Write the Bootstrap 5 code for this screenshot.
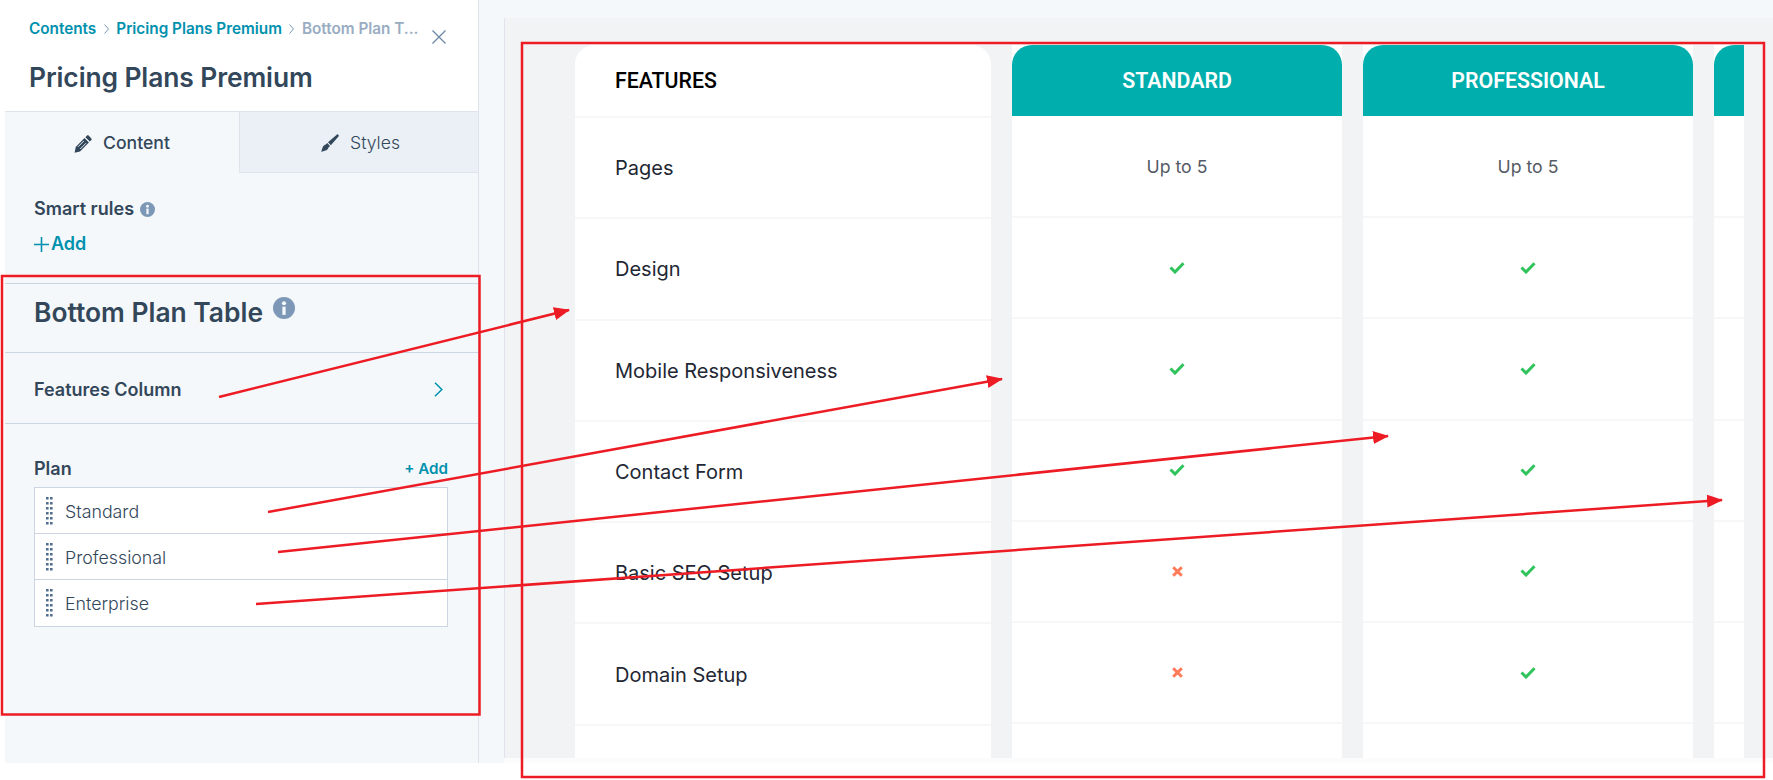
<!DOCTYPE html>
<html lang="en"><head><meta charset="utf-8"><title>Pricing Plans Premium</title>
<link href="https://cdn.jsdelivr.net/npm/bootstrap@5.3.0/dist/css/bootstrap.min.css" rel="stylesheet">
<style>
html,body{height:100%;overflow:hidden;background:#fff}
body{font-family:Inter,"Noto Sans",sans-serif;color:#33475b}
.stage{position:relative;width:1773px;height:780px;overflow:hidden}
.app{height:763px;padding-left:5px}
.side{width:474px;flex:none;background:#f5f8fa;border-right:1px solid #dfe3eb}
.side-head{background:#fff;height:112px;padding:17px 0 0 24px;border-bottom:1px solid #dfe3eb;position:relative}
.crumbs{font-size:15.3px;font-weight:600;color:#0091ae;line-height:24px;gap:7.5px}
.crumbs .cur{color:#99acc2}
.close-x{position:absolute;left:427px;top:30px}
.side-title{font-size:26.4px;font-weight:600;margin-top:21px;line-height:30px;letter-spacing:-.1px}
.tabs-row{height:61px}
.tab-a,.tab-b{display:flex;align-items:center;justify-content:center;gap:11px;font-size:17.6px;height:61px;padding-top:2px}
.tab-a{width:235px;border-right:1px solid #dfe3eb;font-weight:500}
.tab-b{flex:1;background:#eaf0f6;border-bottom:1px solid #dfe3eb;font-weight:300;padding-left:3px}
.rules{padding:26px 0 0 29px;height:110px}
.rules-t{font-size:18px;font-weight:600;line-height:20px;gap:6px}
.add-big{font-size:18px;font-weight:600;color:#0091ae;margin-top:15px;line-height:20px;gap:2px}
.sec-h{border-top:1px solid #cbd6e2;height:69px;padding:13px 0 0 29px;font-size:26.4px;font-weight:600;line-height:30px;gap:10px}
.sec-f{border-top:1px solid #cbd6e2;border-bottom:1px solid #cbd6e2;height:72px;padding:2px 35px 0 29px;font-size:18px;font-weight:600}
.plan-h{padding:35px 30px 0 29px;line-height:20px;font-size:18px;font-weight:600}
.plan-add{font-size:15.2px;color:#0091ae;font-weight:600}
.plans{margin:8px 30px 0 29px;border:1px solid #cbd6e2;background:#fff}
.plan-i{height:46px;border-bottom:1px solid #cbd6e2;padding:0 0 0 11px;gap:12px;font-size:17.8px;font-weight:300;color:#33475b}
.plan-i span{padding-top:3px}
.plan-i:last-child{border-bottom:0}
.main{flex:1;background:#f5f8fa;padding:18px 0 0 25px;min-width:0}
.panel{height:745px;background:#fcfcfc}
.canvas{height:740px;background:#f2f3f5;border-left:1px solid #dfe3eb;padding:27px 28px 0 70px;overflow:hidden}
.cols{height:713px;overflow:hidden;gap:21px}
.pcol{flex:none;width:330px;background:#fff}
.pcol.feat{width:416px;border-radius:20px 20px 0 0}
.pcol.stub{width:30px}
.phead{height:71px;margin-bottom:1px;background:#00afad;color:#fff;border-radius:20px 20px 0 0;font-family:Roboto,sans-serif;font-weight:600;font-size:21.3px}
.stub .phead{border-radius:20px 0 0 0}
.feat .phead{background:#fff;color:#000;justify-content:flex-start;padding-left:40px;border-bottom:2px solid #f7f7f8;height:73px;margin-bottom:0;font-weight:500}
.pcell{height:101.2px;border-bottom:2px solid #f7f7f8;font-size:20px;color:#222733}
.feat .pcell{padding:1px 0 0 40px;justify-content:flex-start;height:101.3px}
.up5{font-size:17.7px;color:#555a64;font-weight:400;padding-top:2px}
.over{position:absolute;left:0;top:0;pointer-events:none}
</style></head><body>
<div class="stage">
<div class="app d-flex">
<aside class="side">
 <div class="side-head">
  <div class="crumbs d-flex align-items-center"><span>Contents</span><svg width="5" height="10" viewBox="0 0 5 10"><path d="M.5 .5L4.500 5 .5 9.500" stroke="#7c98b6" fill="none"/></svg><span>Pricing Plans Premium</span><svg width="5" height="10" viewBox="0 0 5 10"><path d="M.5 .5L4.500 5 .5 9.500" stroke="#7c98b6" fill="none"/></svg><span class="cur">Bottom Plan T...</span></div>
  <svg class="close-x" width="14" height="14" viewBox="0 0 14 14"><path d="M.5 .5l13 13M13.500 .5l-13 13" stroke="#6a87a6" stroke-width="1.300" fill="none"/></svg>
  <div class="side-title">Pricing Plans Premium</div>
 </div>
 <div class="tabs-row d-flex">
  <div class="tab-a"><svg width="18" height="18" viewBox="0 0 18 18"><path d="M13 .6c.5-.4 1.200-.4 1.600 0l2.800 2.800c.4.400.4 1.100 0 1.600l-1.600 1.600-4.400-4.400zM10.500 3.100l4.400 4.400-8.900 8.900-5.400 1.300 1.100-5.700z" fill="#33475b"/><path d="M9.800 6L4 11.800M12 8.200L6.200 14" stroke="#f5f8fa" stroke-width=".9"/></svg><span>Content</span></div>
  <div class="tab-b"><svg width="18" height="18" viewBox="0 0 18 18"><path d="M16 .4c.6-.5 1.200.1 1.500.5.300.4.500 1 0 1.500L9.800 11.200 7 8.300zM6.300 9.100l2.700 2.800-1.500 1.500c-.4 1.800-1.800 2.700-3 3.100-1.100.4-3 .900-4.300 1.300.5-1.300 1-3.100 1.400-4.300.5-1.200 1.400-2.500 3.100-2.900z" fill="#33475b"/></svg><span>Styles</span></div>
 </div>
 <div class="rules">
  <div class="rules-t d-flex align-items-center">Smart rules <svg width="15" height="15" viewBox="0 0 16 16"><circle cx="8" cy="8" r="8" fill="#7c98b6"/><rect x="6.800" y="7" width="2.400" height="6" fill="#f5f8fa"/><circle cx="8" cy="4.500" r="1.500" fill="#f5f8fa"/></svg></div>
  <div class="add-big d-flex align-items-center"><svg width="15" height="15" viewBox="0 0 15 15"><path d="M7.500 0v15M0 7.500h15" stroke="#0091ae" stroke-width="1.600"/></svg><span>Add</span></div>
 </div>
 <div class="sec-h d-flex align-items-start">Bottom Plan Table <svg width="22" height="22" viewBox="0 0 16 16"><circle cx="8" cy="8" r="8" fill="#7c98b6"/><rect x="6.800" y="7" width="2.400" height="6" fill="#f5f8fa"/><circle cx="8" cy="4.500" r="1.500" fill="#f5f8fa"/></svg></div>
 <div class="sec-f d-flex align-items-center justify-content-between"><span>Features Column</span><svg width="9" height="15" viewBox="0 0 9 15"><path d="M1 .8l6.800 6.700L1 14.200" stroke="#0091ae" stroke-width="1.500" fill="none"/></svg></div>
 <div class="plan-h d-flex justify-content-between align-items-center"><span>Plan</span><span class="plan-add">+ Add</span></div>
 <div class="plans">
  <div class="plan-i d-flex align-items-center"><svg width="7" height="28" viewBox="0 0 7 28" fill="#516f90"><path d="M0 0h2.600v2.600H0zM4 0h2.600v2.600H4zM0 5h2.600v2.600H0zM4 5h2.600v2.600H4zM0 10h2.600v2.600H0zM4 10h2.600v2.600H4zM0 15h2.600v2.600H0zM4 15h2.600v2.600H4zM0 20h2.600v2.600H0zM4 20h2.600v2.600H4zM0 25h2.600v2.600H0zM4 25h2.600v2.600H4z"/></svg><span>Standard</span></div>
  <div class="plan-i d-flex align-items-center"><svg width="7" height="28" viewBox="0 0 7 28" fill="#516f90"><path d="M0 0h2.600v2.600H0zM4 0h2.600v2.600H4zM0 5h2.600v2.600H0zM4 5h2.600v2.600H4zM0 10h2.600v2.600H0zM4 10h2.600v2.600H4zM0 15h2.600v2.600H0zM4 15h2.600v2.600H4zM0 20h2.600v2.600H0zM4 20h2.600v2.600H4zM0 25h2.600v2.600H0zM4 25h2.600v2.600H4z"/></svg><span>Professional</span></div>
  <div class="plan-i d-flex align-items-center"><svg width="7" height="28" viewBox="0 0 7 28" fill="#516f90"><path d="M0 0h2.600v2.600H0zM4 0h2.600v2.600H4zM0 5h2.600v2.600H0zM4 5h2.600v2.600H4zM0 10h2.600v2.600H0zM4 10h2.600v2.600H4zM0 15h2.600v2.600H0zM4 15h2.600v2.600H4zM0 20h2.600v2.600H0zM4 20h2.600v2.600H4zM0 25h2.600v2.600H0zM4 25h2.600v2.600H4z"/></svg><span>Enterprise</span></div>
 </div>
</aside>
<main class="main"><div class="panel"><div class="canvas"><div class="cols d-flex" id="cols"></div></div></div></main>
</div>
<svg class="over" width="1773" height="780" viewBox="0 0 1773 780">
 <defs><marker id="ah" markerUnits="userSpaceOnUse" markerWidth="16" markerHeight="14" refX="15" refY="6.500" orient="auto"><path d="M0 0L16 6.500 0 13z" fill="#ed1c24"/></marker></defs>
 <g fill="none" stroke="#ed1c24" stroke-width="2.500">
  <rect x="2" y="276" width="477.500" height="438.500"/>
  <rect x="522" y="43" width="1242" height="734"/>
  <path d="M219 397L569 310" marker-end="url(#ah)"/>
  <path d="M268 512L1002 379" marker-end="url(#ah)"/>
  <path d="M278 552L1388 436" marker-end="url(#ah)"/>
  <path d="M256 604L1722 500" marker-end="url(#ah)"/>
 </g>
</svg>
</div>
<script>
var ck='<svg width="16" height="12" viewBox="0 0 16 12"><path d="M1.500 5.500l4.500 4.500L14.500 1.300" stroke="#2fc35b" stroke-width="3" fill="none"/></svg>';
var xx='<svg width="11" height="11" viewBox="0 0 11 11"><path d="M1.200 1.200l8.600 8.600M9.800 1.200l-8.600 8.600" stroke="#ff7a59" stroke-width="3" fill="none"/></svg>';
var rows=['Pages','Design','Mobile Responsiveness','Contact Form','Basic SEO Setup','Domain Setup',''];
var cols=[['STANDARD',['t',1,1,1,0,0,2],''],['PROFESSIONAL',['t',1,1,1,1,1,2],''],['',[2,2,2,2,2,2,2],' stub']];
var h='<div class="pcol feat"><div class="phead d-flex align-items-center">FEATURES</div>';
rows.forEach(function(r){h+='<div class="pcell d-flex align-items-center">'+r+'</div>'});h+='</div>';
cols.forEach(function(c){h+='<div class="pcol'+c[2]+'"><div class="phead d-flex align-items-center justify-content-center">'+c[0]+'</div>';
c[1].forEach(function(v){h+='<div class="pcell d-flex align-items-center justify-content-center">'+(v==='t'?'<span class="up5">Up to 5</span>':v===1?ck:v===0?xx:'')+'</div>'});h+='</div>'});
document.getElementById('cols').innerHTML=h;
</script>
<script src="https://cdn.jsdelivr.net/npm/bootstrap@5.3.0/dist/js/bootstrap.bundle.min.js"></script>
</body></html>
